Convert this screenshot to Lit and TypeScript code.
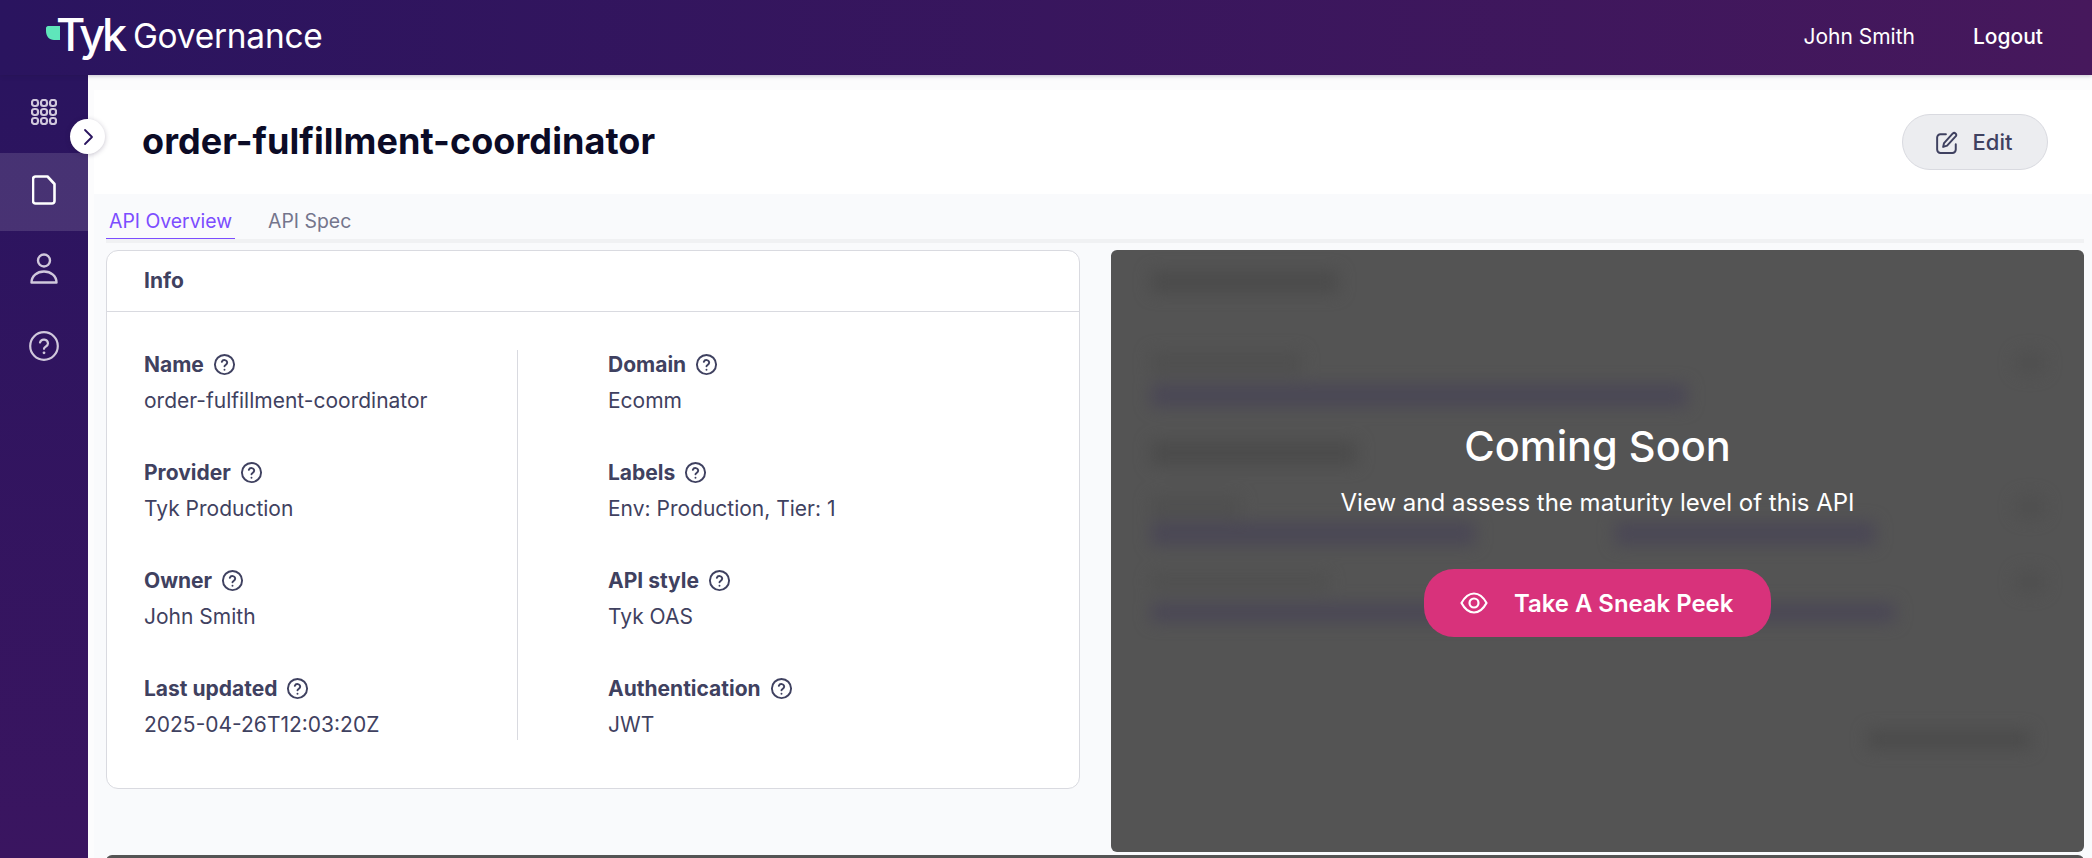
import { LitElement, html, css, svg } from "lit";
import { customElement } from "lit/decorators.js";

const help = html`<svg class="q" viewBox="0 0 24 24" fill="none" stroke="currentColor" stroke-width="2" stroke-linecap="round" stroke-linejoin="round"><circle cx="12" cy="12" r="10"/><path d="M9.2 9.2a2.9 2.9 0 0 1 5.6 1c0 1.9-2.8 2.4-2.8 3.6"/><path d="M12 17.4h.01"/></svg>`;

const left = [["Name", "order-fulfillment-coordinator"], ["Provider", "Tyk Production"], ["Owner", "John Smith"], ["Last updated", "2025-04-26T12:03:20Z"]];
const right = [["Domain", "Ecomm"], ["Labels", "Env: Production, Tier: 1"], ["API style", "Tyk OAS"], ["Authentication", "JWT"]];

const gridDots = [4, 13, 22].flatMap((y) => [4, 13, 22].map((x) => svg`<rect x=${x - 3} y=${y - 3} width="6" height="6" rx="2.4"/>`));

@customElement("app-root")
export class AppRoot extends LitElement {
  static styles = css`
    :host { display: block; width: 100%; height: 100vh; overflow: hidden; font-family: Inter, "Liberation Sans", sans-serif; color: #3f4160; background: #f9fafc; }
    .header { height: 75px; display: flex; align-items: center; justify-content: space-between; background: linear-gradient(90deg, #2a145f 0%, #46185c 100%); color: #fff; position: relative; z-index: 2; box-shadow: 0 1px 4px rgba(30, 20, 60, .25); padding: 0 49px 0 46px; box-sizing: border-box; }
    .brand { display: flex; align-items: center; }
    .leaf { width: 14px; height: 14px; margin-top: -9px; flex: none; }
    .tyk { font-size: 45px; font-weight: 500; letter-spacing: -3.3px; line-height: 1; margin: -7px 9px 0 -4px; }
    .gov { font-size: 33.4px; font-weight: 400; letter-spacing: -.2px; line-height: 1; margin-top: -1px; }
    .user { display: flex; gap: 58px; font-size: 21px; font-weight: 400; margin-top: -2px; }
    .logout { font-weight: 500; }
    .body { display: flex; height: 783px; }
    .side { width: 88px; flex: none; background: linear-gradient(180deg, #2a145f 0%, #3a1560 100%); position: relative; color: #d0c8dc; }
    .item { height: 78px; display: flex; align-items: center; justify-content: center; }
    .item.active { background: rgba(255, 255, 255, .13); color: #fff; }
    .item svg { display: block; margin-top: -4px; }
    .toggle { position: absolute; left: 70px; top: 44px; width: 35px; height: 35px; border-radius: 50%; background: #fff; box-shadow: 0 1px 5px rgba(30, 20, 60, .25); display: flex; align-items: center; justify-content: center; color: #2a145f; z-index: 3; }
    .main { flex: 1; min-width: 0; overflow: hidden; background: #fcfcfd; padding: 15px 0 0 6px; }
    .page { background: #f9fafc; height: 768px; overflow: hidden; }
    .titlebar { height: 104px; background: #fff; padding: 0 44px 0 48px; display: flex; align-items: center; justify-content: space-between; box-sizing: border-box; }
    h1 { margin: -2px 0 0; font-size: 36px; font-weight: 700; color: #0b0b26; letter-spacing: .07px; }
    .edit { width: 146px; height: 56px; box-sizing: border-box; border: 1px solid #d9dae0; border-radius: 28px; background: #ecedf0; display: flex; align-items: center; justify-content: center; gap: 15px; font-size: 22px; font-weight: 500; color: #3f4160; }
    .edit svg { margin-left: -2px; }
    .content { padding: 0 8px 0 12px; }
    .tabs { display: flex; height: 45px; border-bottom: 4px solid #f0f1f3; gap: 30px; }
    .tab { height: 45px; box-sizing: border-box; padding: 14px 3px 0; font-size: 19.4px; line-height: 26px; color: #74758c; }
    .tab.on { color: #7c4dff; border-bottom: 1px solid #7c4dff; }
    .cols { display: grid; grid-template-columns: 974px 973px; gap: 31px; margin-top: 7px; align-items: start; }
    .card { height: 539px; box-sizing: border-box; background: #fff; border: 1px solid #d9dae0; border-radius: 12px; }
    .card-h { height: 61px; padding: 0 37px 2px; box-sizing: border-box; display: flex; align-items: center; border-bottom: 1px solid #d9dae0; font-size: 21px; font-weight: 700; }
    .info { display: flex; padding: 38px 0 0 37px; }
    .col { width: 373px; height: 390px; display: flex; flex-direction: column; gap: 36px; }
    .col.l { border-right: 1px solid #d9dae0; margin-right: 90px; }
    .f { height: 72px; flex: none; box-sizing: border-box; }
    .k { display: flex; align-items: center; gap: 9px; height: 28px; font-size: 21px; font-weight: 700; }
    .v { font-size: 21px; line-height: 28px; margin-top: 9px; }
    .q { width: 23px; height: 23px; }
    .panel { height: 602px; border-radius: 6px; background: #545454; position: relative; overflow: hidden; }
    .blur { filter: blur(8px); padding: 21px 39px 0 40px; box-sizing: border-box; }
    .b { border-radius: 3px; background: #4b4b4b; }
    .p { background: #4a4755; }
    .lb { background: #4f4f4f; }
    .r { display: flex; justify-content: space-between; align-items: center; }
    .dot { width: 30px; height: 22px; border-radius: 10px; background: #4f4f4f; }
    .over { position: absolute; inset: 0; display: flex; flex-direction: column; align-items: center; color: #fff; padding-top: 169px; box-sizing: border-box; }
    .over h2 { margin: 0; font-size: 41.5px; line-height: 54px; font-weight: 500; }
    .over p { margin: 14px 0 0; font-size: 24px; line-height: 32px; }
    .peek { margin-top: 50px; width: 347px; height: 68px; border-radius: 30px; background: #d8327b; display: flex; align-items: center; gap: 26px; padding-left: 36px; box-sizing: border-box; font-size: 23.9px; font-weight: 600; }
    .next { margin-top: 3px; height: 20px; background: #545454; border-radius: 6px 6px 0 0; }
  `;

  private field(f: string[]) {
    return html`<div class="f"><div class="k">${f[0]} ${help}</div><div class="v">${f[1]}</div></div>`;
  }

  render() {
    return html`
      <div class="header">
        <div class="brand">
          <svg class="leaf" viewBox="0 0 14 14"><path d="M2 0H14V14H8C3 14 0 10 0 5V2C0 1 1 0 2 0z" fill="#5fe6bb"/></svg>
          <span class="tyk">Tyk</span><span class="gov">Governance</span>
        </div>
        <div class="user"><span>John Smith</span><span class="logout">Logout</span></div>
      </div>
      <div class="body">
        <div class="side">
          <div class="item"><svg width="26" height="26" viewBox="0 0 26 26" fill="none" stroke="currentColor" stroke-width="2.2">${gridDots}</svg></div>
          <div class="item active"><svg width="24" height="30" viewBox="0 0 24 30" fill="none" stroke="currentColor" stroke-width="2.6" stroke-linejoin="round"><path d="M3.500 1.500H15.500l7 7.500v17a2.500 2.500 0 0 1-2.500 2.500H3.500A2.500 2.500 0 0 1 1 26V4a2.500 2.500 0 0 1 2.500-2.500z"/></svg></div>
          <div class="item"><svg width="28" height="31" viewBox="0 0 28 31" fill="none" stroke="currentColor" stroke-width="2.4" stroke-linejoin="round"><circle cx="14" cy="7.500" r="6"/><path d="M1.500 29.500c0-6.500 5.500-11 12.500-11s12.500 4.500 12.500 11z"/></svg></div>
          <div class="item"><svg width="30" height="30" viewBox="0 0 30 30" fill="none" stroke="currentColor" stroke-width="2.2" stroke-linecap="round"><circle cx="15" cy="15" r="13.800"/><path d="M11 11.500a4.100 4.100 0 0 1 8 1c0 2.700-4 3.400-4 5.300"/><path d="M15 21.800h.01" stroke-width="2.800"/></svg></div>
          <div class="toggle"><svg width="12" height="18" viewBox="0 0 12 18" fill="none" stroke="currentColor" stroke-width="1.800" stroke-linecap="round" stroke-linejoin="round"><path d="M3 2l7 7-7 7"/></svg></div>
        </div>
        <div class="main">
          <div class="page">
            <div class="titlebar">
              <h1>order-fulfillment-coordinator</h1>
              <div class="edit"><svg width="22" height="23" viewBox="0 0 20 21" fill="none" stroke="currentColor" stroke-width="1.800" stroke-linecap="round" stroke-linejoin="round"><path d="M9 3H4a3 3 0 0 0-3 3v11a3 3 0 0 0 3 3h11a3 3 0 0 0 3-3v-5"/><path d="M6.500 14.500l.8-3.500 8-8.800a1.900 1.900 0 0 1 2.800 2.500l-8 8.600z"/></svg><span>Edit</span></div>
            </div>
            <div class="content">
              <div class="tabs"><div class="tab on">API Overview</div><div class="tab">API Spec</div></div>
              <div class="cols">
                <div class="card">
                  <div class="card-h">Info</div>
                  <div class="info">
                    <div class="col l">${left.map((f) => this.field(f))}</div>
                    <div class="col">${right.map((f) => this.field(f))}</div>
                  </div>
                </div>
                <div class="panel">
                  <div class="blur">
                    <div class="b" style="width:187px;height:22px"></div>
                    <div class="r" style="margin-top:59px"><div class="b lb" style="width:151px;height:22px"></div><div class="dot"></div></div>
                    <div class="b p" style="width:536px;height:23px;margin-top:10px"></div>
                    <div class="b" style="width:206px;height:24px;margin-top:34px"></div>
                    <div class="r" style="margin-top:31px"><div class="b lb" style="width:89px;height:20px"></div><div class="dot"></div></div>
                    <div class="r" style="margin-top:4px;justify-content:flex-start;gap:140px"><div class="b p" style="width:324px;height:23px"></div><div class="b p" style="width:260px;height:23px"></div></div>
                    <div class="r" style="margin-top:26px"><div class="b lb" style="width:177px;height:14px"></div><div class="dot"></div></div>
                    <div class="b p" style="width:744px;height:19px;margin-top:10px"></div>
                    <div class="r" style="margin-top:108px;justify-content:flex-end;padding-right:15px"><div class="b" style="width:162px;height:19px"></div></div>
                  </div>
                  <div class="over">
                    <h2>Coming Soon</h2>
                    <p>View and assess the maturity level of this API</p>
                    <div class="peek"><svg width="28" height="22" viewBox="0 0 28 22" fill="none" stroke="currentColor" stroke-width="2.200" stroke-linejoin="round"><path d="M1.500 11C5 4.500 9 1.500 14 1.500S23 4.500 26.500 11C23 17.500 19 20.500 14 20.500S5 17.500 1.500 11z"/><circle cx="14" cy="11" r="4.500"/></svg><span>Take A Sneak Peek</span></div>
                  </div>
                </div>
              </div>
              <div class="next"></div>
            </div>
          </div>
        </div>
      </div>
    `;
  }
}
